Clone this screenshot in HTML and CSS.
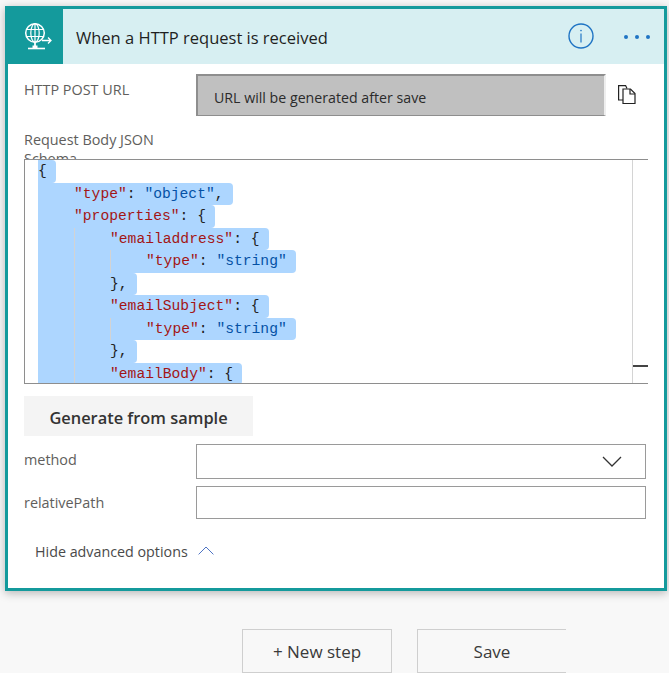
FILE: index.html
```html
<!DOCTYPE html>
<html lang="en">
<head>
<meta charset="utf-8">
<title>When a HTTP request is received</title>
<link rel="stylesheet" href="styles.css">
</head>
<body>
<main class="page">
  <section class="card">
    <header class="card-head">
      <div class="tile">
        <svg class="globe" width="30" height="32" viewBox="0 0 30 32" fill="none" stroke="#fff" stroke-width="1.2">
          <circle cx="13" cy="11" r="9.3" stroke-width="1.5"/>
          <ellipse cx="13" cy="11" rx="4.2" ry="9.3"/>
          <path d="M13 2v18M4.5 7.5h17M4.5 14.5h17"/>
          <path d="M13 20v4" stroke-width="1.8"/>
          <path d="M10.5 23.5h5v3h-5z" fill="#fff" stroke="none"/>
          <path d="M6 26.5h17" stroke-width="1.6"/>
          <path d="M20 18.5h9M26 15.5l3 3-3 3" stroke-width="1.3"/>
        </svg>
      </div>
      <h1 class="title">When a HTTP request is received</h1>
      <svg class="info" width="26" height="26" viewBox="0 0 26 26" fill="none" stroke="#1f74c4">
        <circle cx="13" cy="13" r="12" stroke-width="1.4"/>
        <path d="M13 10.5v9" stroke-width="1.2"/>
        <circle cx="13" cy="7.6" r=".8" fill="#1f74c4" stroke="none"/>
      </svg>
      <div class="dots"><i></i><i></i><i></i></div>
    </header>
    <div class="card-body">
      <div class="row row-url">
        <label class="field-label">HTTP POST URL</label>
        <div class="url-box">URL will be generated after save</div>
        <svg class="copy" width="20" height="21" viewBox="0 0 20 21" fill="none" stroke="#222" stroke-width="1.2">
          <path d="M6 16H1.6V1.6h7l1.4 3"/>
          <path d="M6 5h7.5l4.5 4.5v10H6z" fill="#fff"/>
          <path d="M13 5v5h5"/>
        </svg>
      </div>
      <div class="schema-label">Request Body JSON Schema</div>
      <div class="editor">
        <div class="code">
          <div class="line"><span class="sel"><span class="p">{</span></span></div>
          <div class="line"><span class="sel"><span class="ind"></span><span class="k">"type"</span><span class="p">: </span><span class="s">"object"</span><span class="p">,</span></span></div>
          <div class="line"><span class="sel"><span class="ind"></span><span class="k">"properties"</span><span class="p">: {</span></span></div>
          <div class="line"><span class="sel"><span class="ind"></span><span class="ind guide"></span><span class="k">"emailaddress"</span><span class="p">: {</span></span></div>
          <div class="line"><span class="sel"><span class="ind"></span><span class="ind guide"></span><span class="ind guide"></span><span class="k">"type"</span><span class="p">: </span><span class="s">"string"</span></span></div>
          <div class="line"><span class="sel"><span class="ind"></span><span class="ind guide"></span><span class="p">},</span></span></div>
          <div class="line"><span class="sel"><span class="ind"></span><span class="ind guide"></span><span class="k">"emailSubject"</span><span class="p">: {</span></span></div>
          <div class="line"><span class="sel"><span class="ind"></span><span class="ind guide"></span><span class="ind guide"></span><span class="k">"type"</span><span class="p">: </span><span class="s">"string"</span></span></div>
          <div class="line"><span class="sel"><span class="ind"></span><span class="ind guide"></span><span class="p">},</span></span></div>
          <div class="line"><span class="sel"><span class="ind"></span><span class="ind guide"></span><span class="k">"emailBody"</span><span class="p">: {</span></span></div>
        </div>
        <div class="ruler"><span class="ruler-mark"></span></div>
      </div>
      <button class="generate" type="button">Generate from sample</button>
      <div class="row row-method">
        <label class="field-label">method</label>
        <div class="select">
          <svg width="20" height="11" viewBox="0 0 20 11" fill="none" stroke="#333" stroke-width="1.3"><path d="M1 1l9 9 9-9"/></svg>
        </div>
      </div>
      <div class="row row-path">
        <label class="field-label">relativePath</label>
        <div class="text-input"></div>
      </div>
      <div class="advanced">
        <span>Hide advanced options</span>
        <svg width="16" height="9" viewBox="0 0 16 9" fill="none" stroke="#4f74c4" stroke-width="1"><path d="M.6 8.4L8 1l7.4 7.4"/></svg>
      </div>
    </div>
  </section>
  <footer class="actions">
    <button class="action" type="button">+ New step</button>
    <button class="action action-save" type="button">Save</button>
  </footer>
</main>
</body>
</html>
```
FILE: styles.css
```css
* { box-sizing: border-box; }
html, body { margin: 0; height: 100%; }
body {
  background: #f8f8f8;
  font-family: "Open Sans", "Noto Sans", sans-serif;
  overflow: hidden;
}
.page { padding: 6px 2px 0 5px; }
.card {
  height: 585px;
  background: #fff;
  border: 3px solid #149a9c;
  box-shadow: 0 2px 9px rgba(0, 0, 0, .28);
}
.card-head {
  display: flex;
  align-items: center;
  height: 55px;
  background: #d7eff2;
}
.tile {
  display: flex;
  align-items: center;
  justify-content: center;
  flex: none;
  width: 55px;
  height: 55px;
  background: #149a9c;
  padding: 2px 0 0 2px;
}
.title {
  flex: 1;
  margin: 2px 0 0 13px;
  font-size: 16.5px;
  font-weight: 400;
  color: #1f1f1f;
}
.info { flex: none; margin: -1px 30px 0 0; }
.dots { display: flex; gap: 7px; margin-right: 14px; }
.dots i { width: 4px; height: 4px; border-radius: 50%; background: #1f74c4; }
.card-body { padding: 10px 0 0 16px; }
.row { display: flex; }
.field-label {
  flex: none;
  width: 172px;
  font-size: 14.4px;
  color: #605e5c;
}
.row-url { height: 42px; }
.row-url .field-label { padding-top: 6px; }
.url-box {
  width: 410px;
  height: 42px;
  padding: 11px 16px;
  background: #c0c0c0;
  border: 2px solid #8e8e8e;
  border-right-color: #eee;
  border-bottom-width: 1px;
  font-size: 14.2px;
  line-height: 22px;
  color: #2b2b2b;
}
.copy { flex: none; margin: 10px 0 0 11px; }
.schema-label {
  width: 172px;
  height: 29px;
  margin-top: 14px;
  overflow: hidden;
  font-size: 14.4px;
  line-height: 19px;
  color: #605e5c;
}
.editor {
  display: flex;
  width: 624px;
  height: 225px;
  border: 1px solid #8e8e8e;
  border-right: 0;
  overflow: hidden;
}
.code {
  flex: 1;
  padding-left: 13px;
  font-family: "Liberation Mono", monospace;
  font-size: 14.67px;
  line-height: 22.5px;
}
.line { height: 22.5px; white-space: pre; }
.sel {
  display: inline-block;
  height: 22.5px;
  padding-right: 9px;
  vertical-align: top;
  background: #add6ff;
  border-radius: 0 4px 4px 0;
}
.ind { display: inline-block; width: 36px; height: 22.5px; vertical-align: top; }
.guide { border-left: 1px solid #d3d3d3; }
.k { color: #a31515; }
.s { color: #0451a5; }
.p { color: #222; }
.ruler {
  flex: none;
  width: 16px;
  border-left: 1px solid #d4d4d4;
  padding-top: 205px;
}
.ruler-mark { display: block; height: 2px; background: #444; }
.generate {
  display: block;
  width: 229px;
  height: 40px;
  margin-top: 12px;
  padding: 3px 0 0;
  border: 0;
  background: #f4f4f4;
  font: 600 16.4px "Open Sans", sans-serif;
  color: #333;
}
.row-method { height: 35px; margin-top: 8px; align-items: flex-start; }
.row-path { height: 33px; margin-top: 7px; align-items: flex-start; }
.row-method .field-label { padding-top: 6px; }
.row-path .field-label { padding-top: 7px; }
.select, .text-input {
  width: 450px;
  height: 100%;
  background: #fff;
  border: 1px solid #9a9a9a;
}
.select {
  display: flex;
  align-items: center;
  justify-content: flex-end;
  padding-right: 23px;
}
.advanced {
  display: flex;
  align-items: center;
  gap: 10px;
  margin: 23px 0 0 11px;
  font-size: 14.3px;
  color: #4a4a4a;
}
.advanced svg { margin-top: -3px; }
.actions {
  display: flex;
  gap: 25px;
  padding: 38px 0 0 237px;
}
.action {
  width: 150px;
  height: 44px;
  padding: 1px 0 0;
  background: transparent;
  border: 1px solid #cfcfcf;
  font: 400 17px "Open Sans", sans-serif;
  color: #3a3a3a;
}
.action-save { width: 149px; border-right: 0; }
```
